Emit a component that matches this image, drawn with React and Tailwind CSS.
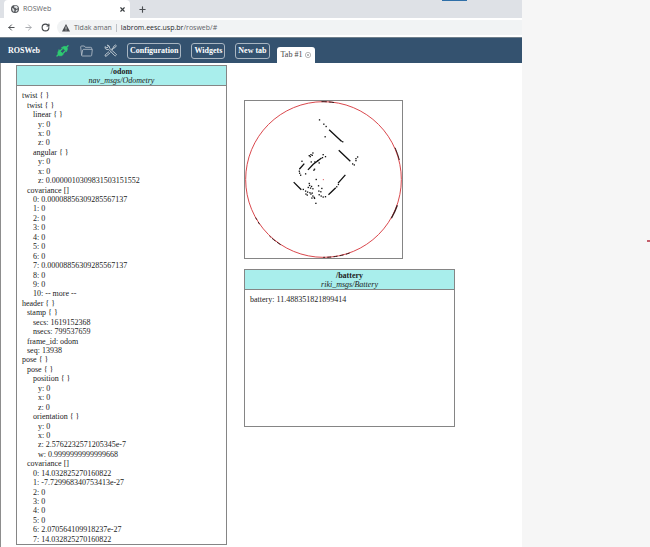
import { ArrowLeft, ArrowRight, Plus, RotateCw, X } from "lucide-react";

const indents = ["pl-0", "pl-[5px]", "pl-[11px]", "pl-4"];

// [depth, text]
const odomRows = [
  [0, "twist { }"],
  [1, "twist { }"],
  [2, "linear { }"],
  [3, "y: 0"],
  [3, "x: 0"],
  [3, "z: 0"],
  [2, "angular { }"],
  [3, "y: 0"],
  [3, "x: 0"],
  [3, "z: 0.0000010309831503151552"],
  [1, "covariance []"],
  [2, "0: 0.00008856309285567137"],
  [2, "1: 0"],
  [2, "2: 0"],
  [2, "3: 0"],
  [2, "4: 0"],
  [2, "5: 0"],
  [2, "6: 0"],
  [2, "7: 0.00008856309285567137"],
  [2, "8: 0"],
  [2, "9: 0"],
  [2, "10: -- more --"],
  [0, "header { }"],
  [1, "stamp { }"],
  [2, "secs: 1619152368"],
  [2, "nsecs: 799537659"],
  [1, "frame_id: odom"],
  [1, "seq: 13938"],
  [0, "pose { }"],
  [1, "pose { }"],
  [2, "position { }"],
  [3, "y: 0"],
  [3, "x: 0"],
  [3, "z: 0"],
  [2, "orientation { }"],
  [3, "y: 0"],
  [3, "x: 0"],
  [3, "z: 2.5762232571205345e-7"],
  [3, "w: 0.9999999999999668"],
  [1, "covariance []"],
  [2, "0: 14.032825270160822"],
  [2, "1: -7.729968340753413e-27"],
  [2, "2: 0"],
  [2, "3: 0"],
  [2, "4: 0"],
  [2, "5: 0"],
  [2, "6: 2.070564109918237e-27"],
  [2, "7: 14.032825270160822"],
];

const scanPoints = [
  [239, 73], [252, 86], [259, 93], [256, 124], [309, 139], [339, 206], [344, 209], [349, 196],
  [349, 190], [354, 185], [208, 181], [213, 178], [219, 173], [217, 180], [211, 184], [238, 203],
  [222, 225], [224, 222], [214, 200], [225, 200], [234, 196], [250, 178], [257, 184], [248, 187],
  [178, 228], [179, 234], [182, 240], [197, 236], [186, 198], [229, 253], [208, 265], [209, 271],
  [215, 274], [205, 277], [219, 281], [212, 279], [190, 283], [197, 288], [203, 291], [198, 297],
  [202, 300], [210, 293], [213, 297], [217, 294], [219, 303], [223, 307], [224, 310], [216, 309],
  [228, 325], [236, 272], [246, 280], [237, 288], [243, 290], [238, 299], [244, 303], [250, 306],
  [257, 305], [296, 268], [291, 275],
];

function GlobeIcon() {
  return (
    <svg viewBox="0 0 16 16" className="size-2 shrink-0" aria-hidden="true">
      <circle cx="8" cy="8" r="8" fill="#55585c" />
      <path d="M2 6l3 1 2 3-1 4-3-3zM7 1l5 1 2 4-3 2-2-2-3-1zM10 10l4-1-2 4-3 1z" fill="#dfe1e3" />
    </svg>
  );
}

function WarningIcon() {
  return (
    <svg viewBox="0 0 16 16" className="size-2 shrink-0" aria-hidden="true">
      <path d="M8 0l8 15H0z" fill="#4a4d51" />
      <path d="M8 5v5M8 11v2" stroke="#f1f3f4" strokeWidth="1.6" />
    </svg>
  );
}

function PlugIcon() {
  return (
    <svg viewBox="0 0 39 36" className="h-3 w-[13px]" aria-hidden="true">
      <g fill="#2ecc71" stroke="#2ecc71" strokeLinecap="round" strokeLinejoin="round">
        <path d="M3 33L9 27M30 8L36 2" strokeWidth="4" />
        <path d="M9 15L22 28L17 32Q10 34 6 29Q3 23 9 15Z" strokeWidth="2" />
        <path d="M18 7L31 20Q37 13 33 7Q27 1 18 7Z" strokeWidth="2" />
        <path d="M13 17L19 11M21 25L27 19" strokeWidth="4" />
      </g>
    </svg>
  );
}

function FolderIcon() {
  return (
    <svg viewBox="0 0 39 36" className="h-3 w-[13px]" fill="none" stroke="#b9c3cd" strokeWidth="2.4" strokeLinejoin="round" aria-hidden="true">
      <path d="M5 31L2 6Q2 3 5 3H13L16 7H32Q35 7 35 10V13" />
      <path d="M5 31L8 15Q9 13 11 13H37L35 31Q35 33 32 33H7Q5 33 5 31Z" />
    </svg>
  );
}

function ToolsIcon() {
  return (
    <svg viewBox="0 0 39 39" className="size-[13px]" fill="none" stroke="#c3ccd4" strokeWidth="2.8" strokeLinejoin="round" aria-hidden="true">
      <path d="M3 8Q2 15 9 17L14 16L31 34Q35 37 37 33Q38 31 35 29L17 13Q18 5 10 3L13 8L9 12Z" />
      <path d="M22 16L28 11L29 7L35 3L37 5L33 11L29 12L24 18" />
      <path d="M15 23L4 32Q1 37 6 37L19 26" />
    </svg>
  );
}

function NavButton({ children }) {
  return (
    <button type="button" className="h-4 rounded-[3px] border border-[#a9b6c2] px-[2px] text-[8px] leading-[14px] font-bold text-white">
      {children}
    </button>
  );
}

function TopicPanel({ topic, type, className, children }) {
  return (
    <section className={`flex w-[211px] flex-col border border-[#858585] bg-white ${className}`}>
      <header className="border-b border-[#858585] bg-[#a9eeec] pt-px text-center leading-[9px]">
        <h2 className="font-bold">{topic}</h2>
        <p className="italic">{type}</p>
      </header>
      {children}
    </section>
  );
}

function LaserScan() {
  return (
    <div className="size-[159px] border border-[#858585] bg-white">
      <svg viewBox="14 16 474 474" className="size-full" fill="none" role="img" aria-label="Laser scan">
        <circle cx="251" cy="253" r="235" stroke="#d9474c" strokeWidth="3" />
        <g stroke="#3b1c1e" strokeWidth="3">
          <path d="M467 157A236 236 0 0 1 480 194" />
          <path d="M474 331A236 236 0 0 1 456 370" strokeWidth="4" />
          <path d="M330 475A236 236 0 0 1 250 488" strokeDasharray="12 7" />
          <path d="M122 450A236 236 0 0 1 88 424" strokeDasharray="14 5" />
          <path d="M58 388A236 236 0 0 1 46 368" strokeDasharray="8 8" />
          <path d="M245 18A236 236 0 0 1 285 21" strokeDasharray="16 6" />
        </g>
        <path
          d="M268 103L306 138M297 165L332 198M204 224L220 207L245 188M178 222L193 205M161 261L184 284M266 299L288 278M295 264L317 239"
          stroke="#111"
          strokeWidth="4"
        />
        {scanPoints.map(([x, y]) => (
          <rect key={`${x}-${y}`} x={x - 2} y={y - 2} width="4" height="4" fill="#111" />
        ))}
        <rect x="249" y="252" width="3" height="3" fill="#d9474c" />
      </svg>
    </div>
  );
}

function BrowserChrome() {
  return (
    <div className="font-['Open_Sans',sans-serif] text-[7px] leading-[10px] text-[#5f6368]">
      <div className="flex h-[18px] items-stretch bg-[#dee1e6] pl-1">
        <div className="flex w-[126px] items-center gap-1 rounded-t-sm bg-white pr-1 pl-[7px]">
          <GlobeIcon />
          <span className="flex-1">ROSWeb</span>
          <button type="button" aria-label="Close tab">
            <X size={7} strokeWidth={4} color="#3c4043" />
          </button>
        </div>
        <button type="button" aria-label="New browser tab" className="ml-2">
          <Plus size={9} strokeWidth={3} color="#4a4d51" />
        </button>
        <div className="mr-[55px] ml-auto h-px w-[25px] bg-[#2f6fa8]" />
      </div>
      <div className="flex h-[19px] items-center bg-white pl-[7px]">
        <div className="flex w-[50px] items-center gap-2">
          <button type="button" aria-label="Back"><ArrowLeft size={9} strokeWidth={2.5} color="#44474b" /></button>
          <button type="button" aria-label="Forward"><ArrowRight size={9} strokeWidth={2.5} color="#a5a8ac" /></button>
          <button type="button" aria-label="Reload"><RotateCw size={9} strokeWidth={3} color="#44474b" /></button>
        </div>
        <div className="flex h-[15px] flex-1 items-center gap-1 rounded-l-full bg-[#f1f3f4] pl-[5px]">
          <WarningIcon />
          <span>Tidak aman</span>
          <span className="h-2 w-px bg-[#bdc1c6]" />
          <a href="#"><span className="text-[#26292c]">labrom.eesc.usp.br</span>/rosweb/#</a>
        </div>
      </div>
    </div>
  );
}

export default function App() {
  return (
    <div className="flex min-h-screen bg-[#f6f6f6] font-['Liberation_Serif','Times_New_Roman',serif] text-[8px] text-[#222]">
      <div className="flex min-w-0 flex-1 flex-col bg-white">
        <BrowserChrome />

        <nav className="flex h-[26px] items-center border-t border-[#71808c] bg-[#34526f] pl-2">
          <a href="#" className="w-12 font-bold text-white">ROSWeb</a>
          <div className="flex w-[71px] items-center gap-[11px]">
            <button type="button" aria-label="Connection"><PlugIcon /></button>
            <button type="button" aria-label="Open workspace"><FolderIcon /></button>
            <button type="button" aria-label="Settings"><ToolsIcon /></button>
          </div>
          <div className="flex items-center gap-[10px]">
            <NavButton>Configuration</NavButton>
            <NavButton>Widgets</NavButton>
            <NavButton>New tab</NavButton>
          </div>
          <div className="ml-[7px] flex items-center gap-[3px] self-end rounded-t-[3px] bg-white px-1 leading-4 text-[#444]">
            <a href="#">Tab #1</a>
            <button type="button" aria-label="Close Tab #1">
              <svg viewBox="0 0 18 18" className="size-[6px]" fill="none" stroke="#999" strokeWidth="2" aria-hidden="true">
                <circle cx="9" cy="9" r="8" />
                <path d="M6 6l6 6M12 6l-6 6" />
              </svg>
            </button>
          </div>
        </nav>

        <main className="flex flex-1 items-start gap-[17px] border-l border-[#8d8d8d] pt-[2px] pb-[2px] pl-[15px]">
          <TopicPanel topic="/odom" type="nav_msgs/Odometry" className="h-[480px]">
            <ul className="grid flex-1 auto-rows-fr items-center pt-[5px] pl-[5px] leading-[9px]">
              {odomRows.map(([depth, text], i) => (
                <li key={i} className={indents[depth]}>{text}</li>
              ))}
            </ul>
          </TopicPanel>

          <div className="flex flex-col gap-[10px] pt-[35px]">
            <LaserScan />
            <TopicPanel topic="/battery" type="riki_msgs/Battery" className="h-[158px]">
              <p className="p-[5px] leading-[9px]">battery: 11.488351821899414</p>
            </TopicPanel>
          </div>
        </main>
      </div>

      <aside className="flex w-32 justify-end pt-60">
        <span className="h-[2px] w-[3px] bg-[#c4606c]" />
      </aside>
    </div>
  );
}
